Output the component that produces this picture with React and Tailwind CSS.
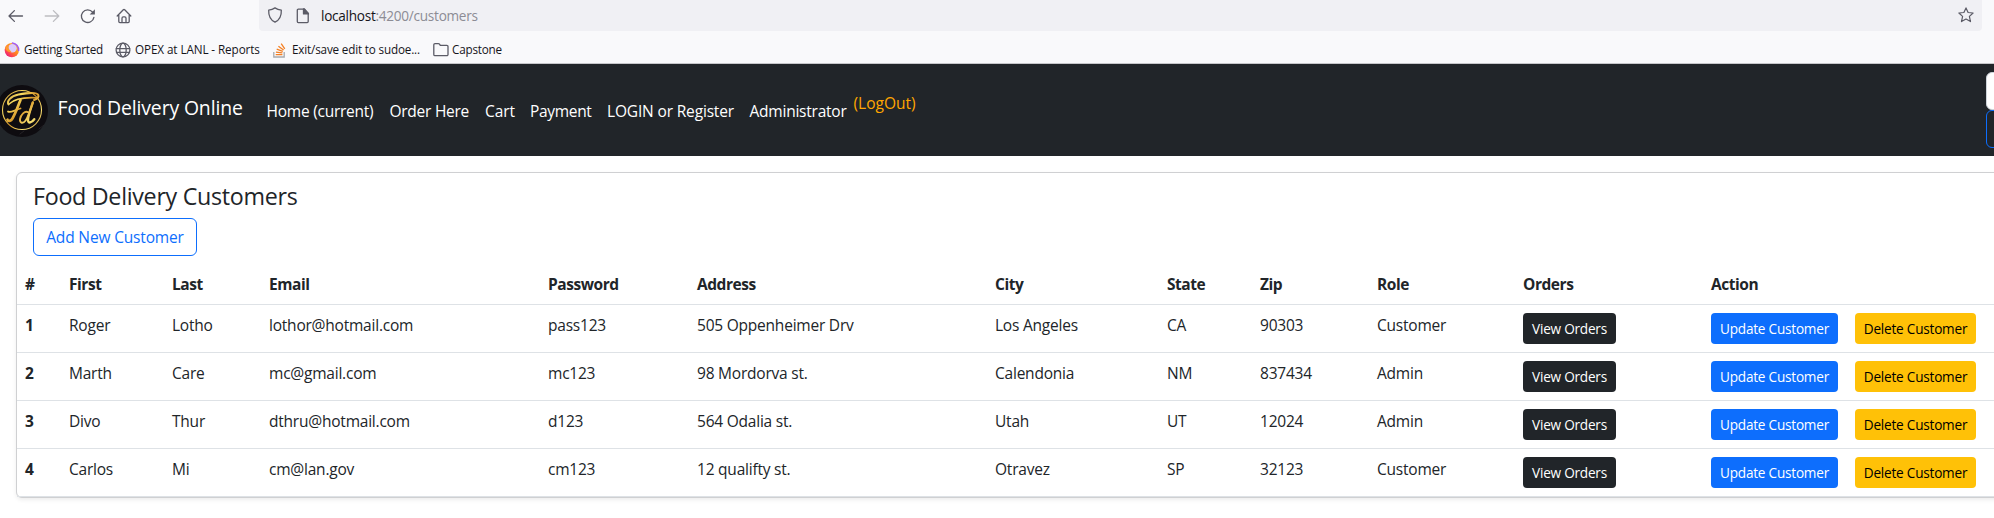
const customers = [
  { id: 1, first: "Roger", last: "Lotho", email: "lothor@hotmail.com", password: "pass123", address: "505 Oppenheimer Drv", city: "Los Angeles", state: "CA", zip: "90303", role: "Customer" },
  { id: 2, first: "Marth", last: "Care", email: "mc@gmail.com", password: "mc123", address: "98 Mordorva st.", city: "Calendonia", state: "NM", zip: "837434", role: "Admin" },
  { id: 3, first: "Divo", last: "Thur", email: "dthru@hotmail.com", password: "d123", address: "564 Odalia st.", city: "Utah", state: "UT", zip: "12024", role: "Admin" },
  { id: 4, first: "Carlos", last: "Mi", email: "cm@lan.gov", password: "cm123", address: "12 qualifty st.", city: "Otravez", state: "SP", zip: "32123", role: "Customer" },
];

const headings = ["#", "First", "Last", "Email", "Password", "Address", "City", "State", "Zip", "Role", "Orders", "Action"];

const columnWidths = [
  "w-[44px]", "w-[103px]", "w-[97px]", "w-[279px]", "w-[149px]", "w-[298px]",
  "w-[172px]", "w-[93px]", "w-[117px]", "w-[146px]", "w-[188px]", "w-[320px]",
];

function Icon({ className, children, ...rest }) {
  return (
    <svg viewBox="0 0 16 16" fill="none" stroke="#5b5b66" strokeWidth="1.3" strokeLinecap="round" strokeLinejoin="round" className={`size-4 shrink-0 ${className || ""}`} {...rest}>
      {children}
    </svg>
  );
}

function Toolbar() {
  return (
    <div className="flex h-[31px] items-center">
      <Icon className="ml-2"><path d="M14.5 8H1.2M6.4 2.6L1 8l5.4 5.4" /></Icon>
      <Icon className="ml-5" stroke="#bdbdc1"><path d="M1.2 8h13.3M9.4 2.6L14.8 8l-5.4 5.4" /></Icon>
      <Icon className="ml-5">
        <path d="M13.9 9.3A6.3 6.3 0 1 1 12.6 4.2" />
        <path d="M14.9 1.3v5.2H9.7z" fill="#5b5b66" stroke="none" />
      </Icon>
      <Icon className="ml-5">
        <path d="M1.2 8L7.3 1.8a1 1 0 0 1 1.4 0L14.8 8M2.8 7v6.6c0 .7.5 1.1 1.1 1.1h8.2c.6 0 1.1-.4 1.1-1.1V7M6 14.5V10.2c0-.8.5-1.3 1.2-1.3h1.6c.7 0 1.2.5 1.2 1.3v4.3" />
      </Icon>
      <div className="ml-[127px] flex h-full w-[1723px] shrink-0 items-center rounded-b-[4px] bg-[#f0f0f4] px-2">
        <Icon className="mb-0.5"><path d="M8 .9C6.2 2.2 4.2 2.9 1.7 3.1c-.3 5.5 1.5 9.7 6.3 12.1 4.8-2.4 6.6-6.6 6.3-12.1C11.8 2.9 9.8 2.2 8 .9z" /></Icon>
        <Icon className="ml-3">
          <path d="M3.3 1.2h5.9l4 4v8.4a1 1 0 0 1-1 1H3.300a1 1 0 0 1-1-1V2.200a1 1 0 0 1 1-1z" />
          <path d="M8.5 1v4.9h5L9.400 1z" fill="#5b5b66" />
        </Icon>
        <span className="ml-2.5 pt-0.5 text-[13.6px] tracking-[-0.27px] text-[#15141a]">
          localhost<span className="text-[#8c8c94]">:4200/customers</span>
        </span>
        <Icon className="mb-0.5 ml-auto"><path d="M8 .9l2.1 4.6 5 .5-3.7 3.4 1.1 5.2L8 12.1l-4.5 2.5 1.1-5.2L.9 6l5-.5z" strokeWidth="1.2" /></Icon>
      </div>
    </div>
  );
}

function Bookmarks() {
  return (
    <div className="flex h-8 items-center pt-1.5 pb-px text-[11.7px] text-[#15141a]">
      <svg viewBox="0 0 16 16" className="ml-1 size-4 shrink-0">
        <defs>
          <linearGradient id="fox" x1="1" y1="0.1" x2="0.2" y2="1">
            <stop offset="0" stopColor="#ffd53d" />
            <stop offset="0.45" stopColor="#ff8a1e" />
            <stop offset="0.75" stopColor="#ff4a4c" />
            <stop offset="1" stopColor="#e31587" />
          </linearGradient>
        </defs>
        <circle cx="7.8" cy="8.1" r="7.2" fill="url(#fox)" />
        <circle cx="8.4" cy="6.3" r="4.3" fill="#dccdfd" />
        <path d="M8.5.9a7 7 0 0 1 6.1 7.6" fill="none" stroke="#a45cf5" strokeWidth="1.5" strokeLinecap="round" />
        <path d="M1.2 5.5C2 3.9 3.2 3.4 4.5 3.5 4.3 6 5 8 7.5 9.7 4.5 10.5 1.5 9 1.2 5.5z" fill="#ff9a2e" />
      </svg>
      <span className="ml-1 w-[79px] whitespace-nowrap tracking-[-0.24px]">Getting Started</span>
      <Icon className="ml-3"><circle cx="8" cy="8" r="6.9" /><ellipse cx="8" cy="8" rx="3.2" ry="6.9" /><path d="M1.2 6.6h13.6M1.5 10.3h13" /></Icon>
      <span className="ml-1 w-[125px] whitespace-nowrap tracking-[-0.09px]">OPEX at LANL - Reports</span>
      <svg viewBox="0 0 16 16" fill="none" className="ml-3 size-4 shrink-0">
        <path d="M1.8 10v5h10.4v-5" stroke="#a6a9ad" strokeWidth="1.3" />
        <path d="M3.7 12.7h6.700M3.900 10.100l6.500.8M4.700 7.200l6.100 2.100M6.400 4.200l5.200 3.900M9.200 1.600l3.600 5.300" stroke="#f48024" strokeWidth="1.3" />
      </svg>
      <span className="ml-1 w-[129px] whitespace-nowrap tracking-[-0.17px]">Exit/save edit to sudoe...</span>
      <Icon className="ml-3"><path d="M.8 12.5v-9.700a1.200 1.200 0 0 1 1.200-1.200h3.300c.5 0 .9.200 1.200.6l.8 1.200h6.500a1.200 1.200 0 0 1 1.200 1.200v7.900a1.200 1.200 0 0 1-1.200 1.200H2a1.200 1.200 0 0 1-1.200-1.200z" /></Icon>
      <span className="ml-[3px] whitespace-nowrap tracking-[-0.2px]">Capstone</span>
    </div>
  );
}

function Logo() {
  return (
    <svg viewBox="0 0 48 54" className="h-[54px] w-12 shrink-0" fill="none" strokeLinecap="round" strokeLinejoin="round">
      <defs>
        <linearGradient id="gold" x1="0" y1="8" x2="42" y2="46" gradientUnits="userSpaceOnUse">
          <stop offset="0" stopColor="#b8822a" />
          <stop offset="0.3" stopColor="#f8dc62" />
          <stop offset="0.5" stopColor="#d99a2b" />
          <stop offset="0.75" stopColor="#fbe374" />
          <stop offset="1" stopColor="#a8731f" />
        </linearGradient>
      </defs>
      <circle cx="22" cy="27" r="26" fill="#0e0c10" />
      <path d="M39 45l5-4M20 50l4-3" stroke="#29272b" strokeWidth="0.8" />
      <circle cx="22" cy="26" r="19.5" stroke="url(#gold)" strokeWidth="1.1" />
      <g stroke="url(#gold)">
        <path d="M8.500 20.500c-2-3 2-8.500 10-10C27 9 37 8 38.300 11c.8 2-1.800 4-4.300 5" strokeWidth="2" />
        <path d="M9 20c5-5 14-6.800 26.500-6.300" strokeWidth="1.6" />
        <path d="M20.500 16c-2.500 6-4.500 12.500-8 18.500-1.500 2.600-4.500 3.300-5 1.200" strokeWidth="2.7" />
        <path d="M8 27.500c2.200 2 6.500-1.500 12.500-3" strokeWidth="1.8" />
        <path d="M28 28.200c-3-2-7.500 2.800-8 7-.4 4.200 3 4.700 5.600 1.300 2.400-3.300 5-11 7.200-18" strokeWidth="1.9" />
        <path d="M32.800 18.500c-2 6-5 14-4.800 17.700.2 3.600 3.600 2.600 6.300-1" strokeWidth="2.4" />
      </g>
    </svg>
  );
}

function Navbar() {
  return (
    <nav className="flex h-[92px] items-start overflow-hidden bg-[#212529] text-white">
      <div className="flex h-full w-[259px] shrink-0 items-start pt-5">
        <Logo />
        <span className="ml-[9.5px] pt-[9px] text-[19.4px] leading-[30px] tracking-[-0.13px] whitespace-nowrap">Food Delivery Online</span>
      </div>
      <div className="flex gap-4 pt-[35px] pl-[7.5px] text-[15.5px] leading-6 whitespace-nowrap">
        <a className="w-[107px] tracking-[-0.24px]">Home (current)</a>
        <a className="w-[79.5px] tracking-[-0.26px]">Order Here</a>
        <a className="w-[29px] tracking-[-0.1px]">Cart</a>
        <a className="w-[61px] tracking-[-0.32px]">Payment</a>
        <a className="w-[126.5px] tracking-[-0.16px]">LOGIN or Register</a>
        <a className="w-[97px] tracking-[-0.23px]">Administrator</a>
      </div>
      <a className="ml-[7px] pt-[27px] text-[15.5px] leading-6 text-[#ffa500]">(LogOut)</a>
      <div className="ml-auto w-2 shrink-0 pt-2">
        <div className="h-[38px] w-[210px] rounded-md border border-[#ced4da] bg-white" />
        <div className="h-[38px] w-[80px] rounded-md border border-[#0d6efd]" />
      </div>
    </nav>
  );
}

const smallButton = "inline-flex h-[31px] items-center justify-center rounded text-[13.6px] tracking-[-0.22px] whitespace-nowrap";

function Cell({ children }) {
  return <td className="border-b border-[#dee2e6] px-2 pt-2 pb-0 align-top">{children}</td>;
}

function CustomerTable() {
  return (
    <table className="w-[2006px] table-fixed border-separate border-spacing-0 text-left text-[15.5px] leading-6 tracking-[-0.22px]">
      <colgroup>
        {columnWidths.map((w, i) => <col key={i} className={w} />)}
      </colgroup>
      <thead>
        <tr className="h-[41px]">
          {headings.map((h) => <th key={h} className="border-b border-[#dee2e6] p-2 font-bold tracking-[-0.45px]">{h}</th>)}
        </tr>
      </thead>
      <tbody>
        {customers.map((c) => (
          <tr key={c.id} className="h-12">
            <th className="border-b border-[#dee2e6] px-2 pt-2 pb-0 align-top font-bold">{c.id}</th>
            <Cell>{c.first}</Cell>
            <Cell>{c.last}</Cell>
            <Cell>{c.email}</Cell>
            <Cell>{c.password}</Cell>
            <Cell>{c.address}</Cell>
            <Cell>{c.city}</Cell>
            <Cell>{c.state}</Cell>
            <Cell>{c.zip}</Cell>
            <Cell>{c.role}</Cell>
            <Cell>
              <div className="flex"><button className={`${smallButton} w-[93px] bg-[#212529] text-white`}>View Orders</button></div>
            </Cell>
            <Cell>
              <div className="flex gap-[17px]">
                <button className={`${smallButton} w-[127px] bg-[#0d6efd] text-white`}>Update Customer</button>
                <button className={`${smallButton} w-[121px] bg-[#ffc107] text-black`}>Delete Customer</button>
              </div>
            </Cell>
          </tr>
        ))}
      </tbody>
    </table>
  );
}

export default function App() {
  return (
    <div className="h-[518px] w-full overflow-hidden bg-white font-['Open_Sans','Noto_Sans',sans-serif] text-[#212529]">
      <header className="h-16 border-b border-[#c6c6ca] bg-[#f9f9fb]">
        <Toolbar />
        <Bookmarks />
      </header>
      <Navbar />
      <main className="pt-4 pl-4">
        <section className="w-[2010px] rounded-md border border-[#cfd0d2] bg-white shadow-[0_2px_4px_rgba(0,0,0,0.075)]">
          <div className="px-4 pt-2 pb-2">
            <h4 className="h-[37px] text-[23.25px] leading-[30px] tracking-[-0.29px]">Food Delivery Customers</h4>
            <button className="flex h-[38px] w-[164px] items-center justify-center rounded-md border border-[#0d6efd] pt-px text-[15.5px] tracking-[-0.16px] text-[#0d6efd]">Add New Customer</button>
          </div>
          <CustomerTable />
        </section>
      </main>
    </div>
  );
}
